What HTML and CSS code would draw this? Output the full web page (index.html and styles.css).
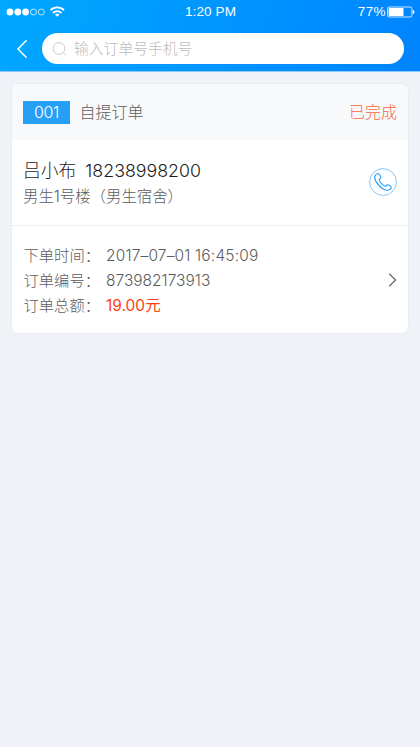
FILE: index.html
```html
<!DOCTYPE html>
<html lang="zh-CN">
<head>
<meta charset="utf-8">
<title>订单</title>
<link rel="stylesheet" href="styles.css">
</head>
<body>
<header class="top">
  <div class="status">
    <div class="signal">
      <svg width="66" height="14" viewBox="0 0 66 14" fill="none">
        <g fill="#fff"><circle cx="4" cy="7" r="3.4"/><circle cx="11.8" cy="7" r="3.4"/><circle cx="19.6" cy="7" r="3.4"/></g>
        <g stroke="#fff" stroke-width=".7"><circle cx="27.5" cy="7" r="3"/><circle cx="35.3" cy="7" r="3"/></g>
        <g stroke="#fff" stroke-width="1.8"><path d="M44.500 5.200C48 1.300 54.500 1.300 58 5.200"/><path d="M47 8C49.300 5.400 53.200 5.400 55.500 8"/></g>
        <path d="M48.900 9.400Q51.250 7.500 53.600 9.400L51.250 11.800Z" fill="#fff"/>
      </svg>
    </div>
    <div class="clock">1:20 PM</div>
    <div class="power"><span>77%</span>
      <svg width="28" height="12" viewBox="0 0 28 12" fill="none"><rect x=".6" y="1" width="24.300" height="10" rx="1.500" stroke="#fff" stroke-width=".8"/><path d="M1.700 2H16.500V10H1.700Z" fill="#fff"/><path d="M25.700 4Q27.500 4.200 27.500 6T25.700 8Z" fill="#fff"/></svg>
    </div>
  </div>
  <div class="searchbar">
    <svg class="back" width="12" height="20" viewBox="0 0 12 20" fill="none" stroke="#fff" stroke-width="1.500"><path d="M10.600 1.200L2 10L10.600 18.800"/></svg>
    <div class="field">
      <svg width="16" height="16" viewBox="0 0 16 16" fill="none" stroke="#ccc"><circle cx="7" cy="7.500" r="5.900"/><path d="M11.300 11.800L14 14.500"/></svg>
      <span>输入订单号手机号</span>
    </div>
  </div>
</header>
<main class="card">
  <section class="head">
    <span class="tag">001</span><span class="kind">自提订单</span><span class="state">已完成</span>
  </section>
  <section class="person">
    <div class="contact">
      <div class="name"><span>吕小布</span><span class="tel">18238998200</span></div>
      <div class="address">男生1号楼（男生宿舍）</div>
    </div>
    <svg class="call" width="28" height="28" viewBox="0 0 28 28" fill="none" stroke="#2ba0f5"><circle cx="14" cy="14" r="13.400" stroke-width=".9" opacity=".65"/><path d="M8.600 5.700C7 5.900 5.500 8 5.700 9.900C6.300 14.500 12.800 21.500 17.400 22.200C19.500 22.500 22.300 20.600 22.300 19.500C22.200 18.100 19.300 16.500 18.200 16.800C17.200 17.100 17.200 18.500 16.100 18.200C14.200 17.700 10.600 13.900 10.200 12C10 10.900 11.500 11 11.800 9.900C12.100 8.800 10.100 5.500 8.600 5.700Z" stroke-width="1.150"/></svg>
  </section>
  <section class="detail">
    <dl>
      <dt>下单时间：</dt><dd class="time">2017–07–01 16:45:09</dd>
      <dt>订单编号：</dt><dd class="number">873982173913</dd>
      <dt>订单总额：</dt><dd class="price">19.00元</dd>
    </dl>
    <svg width="9" height="14" viewBox="0 0 9 14" fill="none" stroke="#666" stroke-width="1.200"><path d="M1.200 .8L7.600 7L1.200 13.200"/></svg>
  </section>
</main>
</body>
</html>
```

FILE: styles.css
```css
* { box-sizing: border-box; }
body {
  margin: 0;
  min-height: 747px;
  background: #eff3f8;
  color: #5c5c5c;
  font-family: Inter, "Noto Sans CJK SC", sans-serif;
  font-weight: 300;
  white-space: nowrap;
}
svg { display: block; flex: none; }
.top {
  height: 72px;
  background: linear-gradient(110deg, #00a8ff, #0084ff);
  border-bottom: 1px solid #8dcaff;
}
.status {
  display: grid;
  grid-template-columns: 1fr auto 1fr;
  align-items: center;
  height: 24px;
  padding: 0 5px 0 6px;
  color: #fff;
  font: 13.5px/24px "Liberation Sans", sans-serif;
}
.clock { letter-spacing: .1px; }
.power { display: flex; justify-content: flex-end; align-items: center; gap: 1px; letter-spacing: .4px; }
.searchbar { display: flex; align-items: center; padding: 9px 16px 0 16px; }
.field {
  display: flex;
  align-items: center;
  flex: 1;
  height: 31px;
  margin-left: 14px;
  padding-left: 10px;
  gap: 6px;
  border-radius: 16px;
  background: #fff;
  color: #bdbdbd;
  font-size: 14.8px;
  line-height: 31px;
}
.field span { padding-top: 2px; }
.card {
  width: 398px;
  height: 251px;
  margin: 11px 0 0 11px;
  border: 1px solid #e9edf1;
  border-radius: 7px;
  background: #fff;
  overflow: hidden;
}
.head {
  display: flex;
  align-items: center;
  height: 56px;
  padding: 0 11px;
  background: #f7f9fb;
  font-size: 16px;
}
.tag {
  width: 47px;
  height: 23px;
  background: #269ff7;
  color: #fff;
  line-height: 23px;
  text-align: center;
  font-size: 16px;
  letter-spacing: -.3px;
}
.kind, .state { padding-bottom: 2px; }
.kind { margin-left: 9.5px; }
.state { margin-left: auto; color: #ff6540; }
.person {
  display: flex;
  align-items: center;
  justify-content: space-between;
  height: 86px;
  padding: 0 11px;
  border-bottom: 1px solid #edf0f2;
}
.call { margin-bottom: 1px; }
.contact { padding-top: 2px; }
.name { display: flex; gap: 9px; height: 26px; color: #1c1c1c; font-size: 17.8px; line-height: 26px; }
.address { height: 26px; font-size: 15.4px; line-height: 26px; }
.detail {
  display: flex;
  align-items: center;
  justify-content: space-between;
  height: 108px;
  padding: 0 11px;
}
dl {
  display: grid;
  grid-template-columns: 83px auto;
  grid-auto-rows: 25px;
  margin: 0;
  font-size: 15.5px;
  line-height: 25px;
}
dt { font-size: 15.3px; padding-left: .5px; }
dd { margin: 0; }
.time { letter-spacing: .16px; }
.price { color: #ff4013; font-weight: 400; }
```
